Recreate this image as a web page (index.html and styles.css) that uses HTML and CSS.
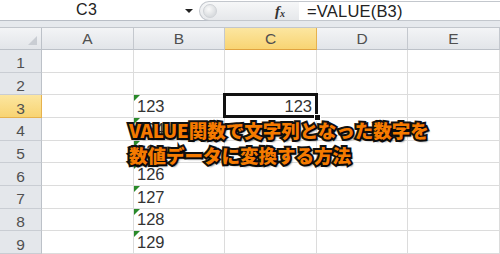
FILE: index.html
```html
<!DOCTYPE html>
<html lang="ja">
<head>
<meta charset="utf-8">
<link rel="stylesheet" href="styles.css">
</head>
<body>
<div class="app">
  <div class="fbar">
    <div class="namebox"><span class="name">C3</span><span class="arrow"></span></div>
    <div class="pill">
      <span class="knob"></span>
      <span class="fx">f<sub>x</sub></span>
      <div class="formula">=VALUE(B3)</div>
    </div>
  </div>
  <div class="band"></div>
  <div class="sheet">
    <div class="corner"><span class="tri"></span></div>
    <div class="ch">A</div><div class="ch">B</div><div class="ch sel">C</div><div class="ch">D</div><div class="ch">E</div>

    <div class="rh">1</div><div class="c"></div><div class="c"></div><div class="c"></div><div class="c"></div><div class="c"></div>
    <div class="rh">2</div><div class="c"></div><div class="c"></div><div class="c"></div><div class="c"></div><div class="c"></div>
    <div class="rh sel">3</div><div class="c"></div><div class="c t">123</div><div class="c active">123</div><div class="c"></div><div class="c"></div>
    <div class="rh">4</div><div class="c"></div><div class="c t">124</div><div class="c"></div><div class="c"></div><div class="c"></div>
    <div class="rh">5</div><div class="c"></div><div class="c t">125</div><div class="c"></div><div class="c"></div><div class="c"></div>
    <div class="rh">6</div><div class="c"></div><div class="c t">126</div><div class="c"></div><div class="c"></div><div class="c"></div>
    <div class="rh">7</div><div class="c"></div><div class="c t">127</div><div class="c"></div><div class="c"></div><div class="c"></div>
    <div class="rh">8</div><div class="c"></div><div class="c t">128</div><div class="c"></div><div class="c"></div><div class="c"></div>
    <div class="rh">9</div><div class="c"></div><div class="c t">129</div><div class="c"></div><div class="c"></div><div class="c"></div>

    <div class="caption">VALUE関数で文字列となった数字を<br>数値データに変換する方法</div>
  </div>
</div>
</body>
</html>
```
FILE: styles.css
```css
html, body { margin: 0; padding: 0; }
body { width: 500px; height: 254px; overflow: hidden; background: #fff; font-family: "Liberation Sans", Arial, sans-serif; color: #333; }
.app { width: 500px; height: 254px; position: relative; overflow: hidden; }

.fbar { height: 20px; display: flex; background: #fff; border-bottom: 1px solid #b9bec6; }
.namebox { width: 196px; display: flex; align-items: center; position: relative; background: #fff; }
.name { margin-left: 76px; font-size: 16px; color: #222; letter-spacing: 0.5px; }
.arrow { position: absolute; left: 185px; top: 9px; width: 0; height: 0; border-left: 4px solid transparent; border-right: 4px solid transparent; border-top: 4px solid #222; }
.pill { flex: 1; margin-left: 3px; margin-top: 1px; height: 18px; border: 1px solid #c3c7cd; border-right: none; border-radius: 10px 0 0 10px; background: linear-gradient(#f6f7f8, #e6e8eb); display: flex; align-items: center; position: relative; }
.knob { width: 12px; height: 12px; border-radius: 50%; background: radial-gradient(circle at 40% 35%, #fafafa, #d9dcdf 70%); border: 1px solid #cfd2d6; margin-left: 3px; }
.fx { margin-left: 58px; font-family: "Liberation Serif", serif; font-style: italic; font-weight: bold; font-size: 15px; color: #333; width: 20px; }
.fx sub { font-size: 10px; vertical-align: -1px; }
.formula { margin-left: 4px; align-self: stretch; flex: 1; background: #fff; display: flex; align-items: center; padding-left: 8px; font-size: 16.5px; color: #222; letter-spacing: 0.2px; }

.band { height: 6px; background: #e6e9ed; border-bottom: 1px solid #c2c6cc; }

.sheet { display: grid; grid-template-columns: 42px 92px 91px 92px 91px 92px; grid-template-rows: 22px repeat(9, 22.67px); position: relative; }
.corner, .ch, .rh { background: linear-gradient(#f3f4f6, #e2e5e9); color: #505050; font-size: 15.5px; display: flex; align-items: center; justify-content: center; box-sizing: border-box; }
.corner { border-right: 1px solid #bcc1c8; border-bottom: 1px solid #bcc1c8; position: relative; }
.tri { position: absolute; right: 4px; bottom: 4px; width: 0; height: 0; border-left: 9px solid transparent; border-bottom: 9px solid #c9cdd3; }
.ch { border-right: 1px solid #c4c8ce; border-bottom: 1px solid #bcc1c8; padding-top: 1px; }
.rh { background: #e4e7eb; border-right: 1px solid #bcc1c8; border-bottom: 1px solid #c9cdd3; padding-top: 5px; }
.ch.sel, .rh.sel { background: linear-gradient(#fce6a0, #f8d473); border-color: #e6b24e; color: #505050; }
.ch.sel { border-bottom: 1px solid #e0a340; }

.c { border-right: 1px solid #dcdcdc; border-bottom: 1px solid #dcdcdc; box-sizing: border-box; font-size: 16.5px; color: #333; display: flex; align-items: flex-end; padding: 0 3px 1px 3px; position: relative; }
.c.t::before { content: ""; position: absolute; left: 0; top: 0; width: 0; height: 0; border-top: 6px solid #2a8a2a; border-right: 6px solid transparent; }
.c.active { justify-content: flex-end; padding-right: 4px; z-index: 2; }
.c.active::after { content: ""; position: absolute; left: -2px; top: -2px; right: -2px; bottom: -1px; border: 3px solid #111; box-sizing: border-box; }
.c.active::before { content: ""; position: absolute; right: -5px; bottom: -4px; width: 5px; height: 5px; background: #111; border: 1px solid #fff; z-index: 2; }

.caption { position: absolute; left: 129px; top: 90px; font-family: "Noto Sans CJK JP", sans-serif; font-weight: 900; font-size: 18.5px; line-height: 25px; color: #f57a00; -webkit-text-stroke: 4px #111; paint-order: stroke fill; text-shadow: 2px 2px 2px rgba(0,0,0,0.6); white-space: nowrap; z-index: 3; }
```
